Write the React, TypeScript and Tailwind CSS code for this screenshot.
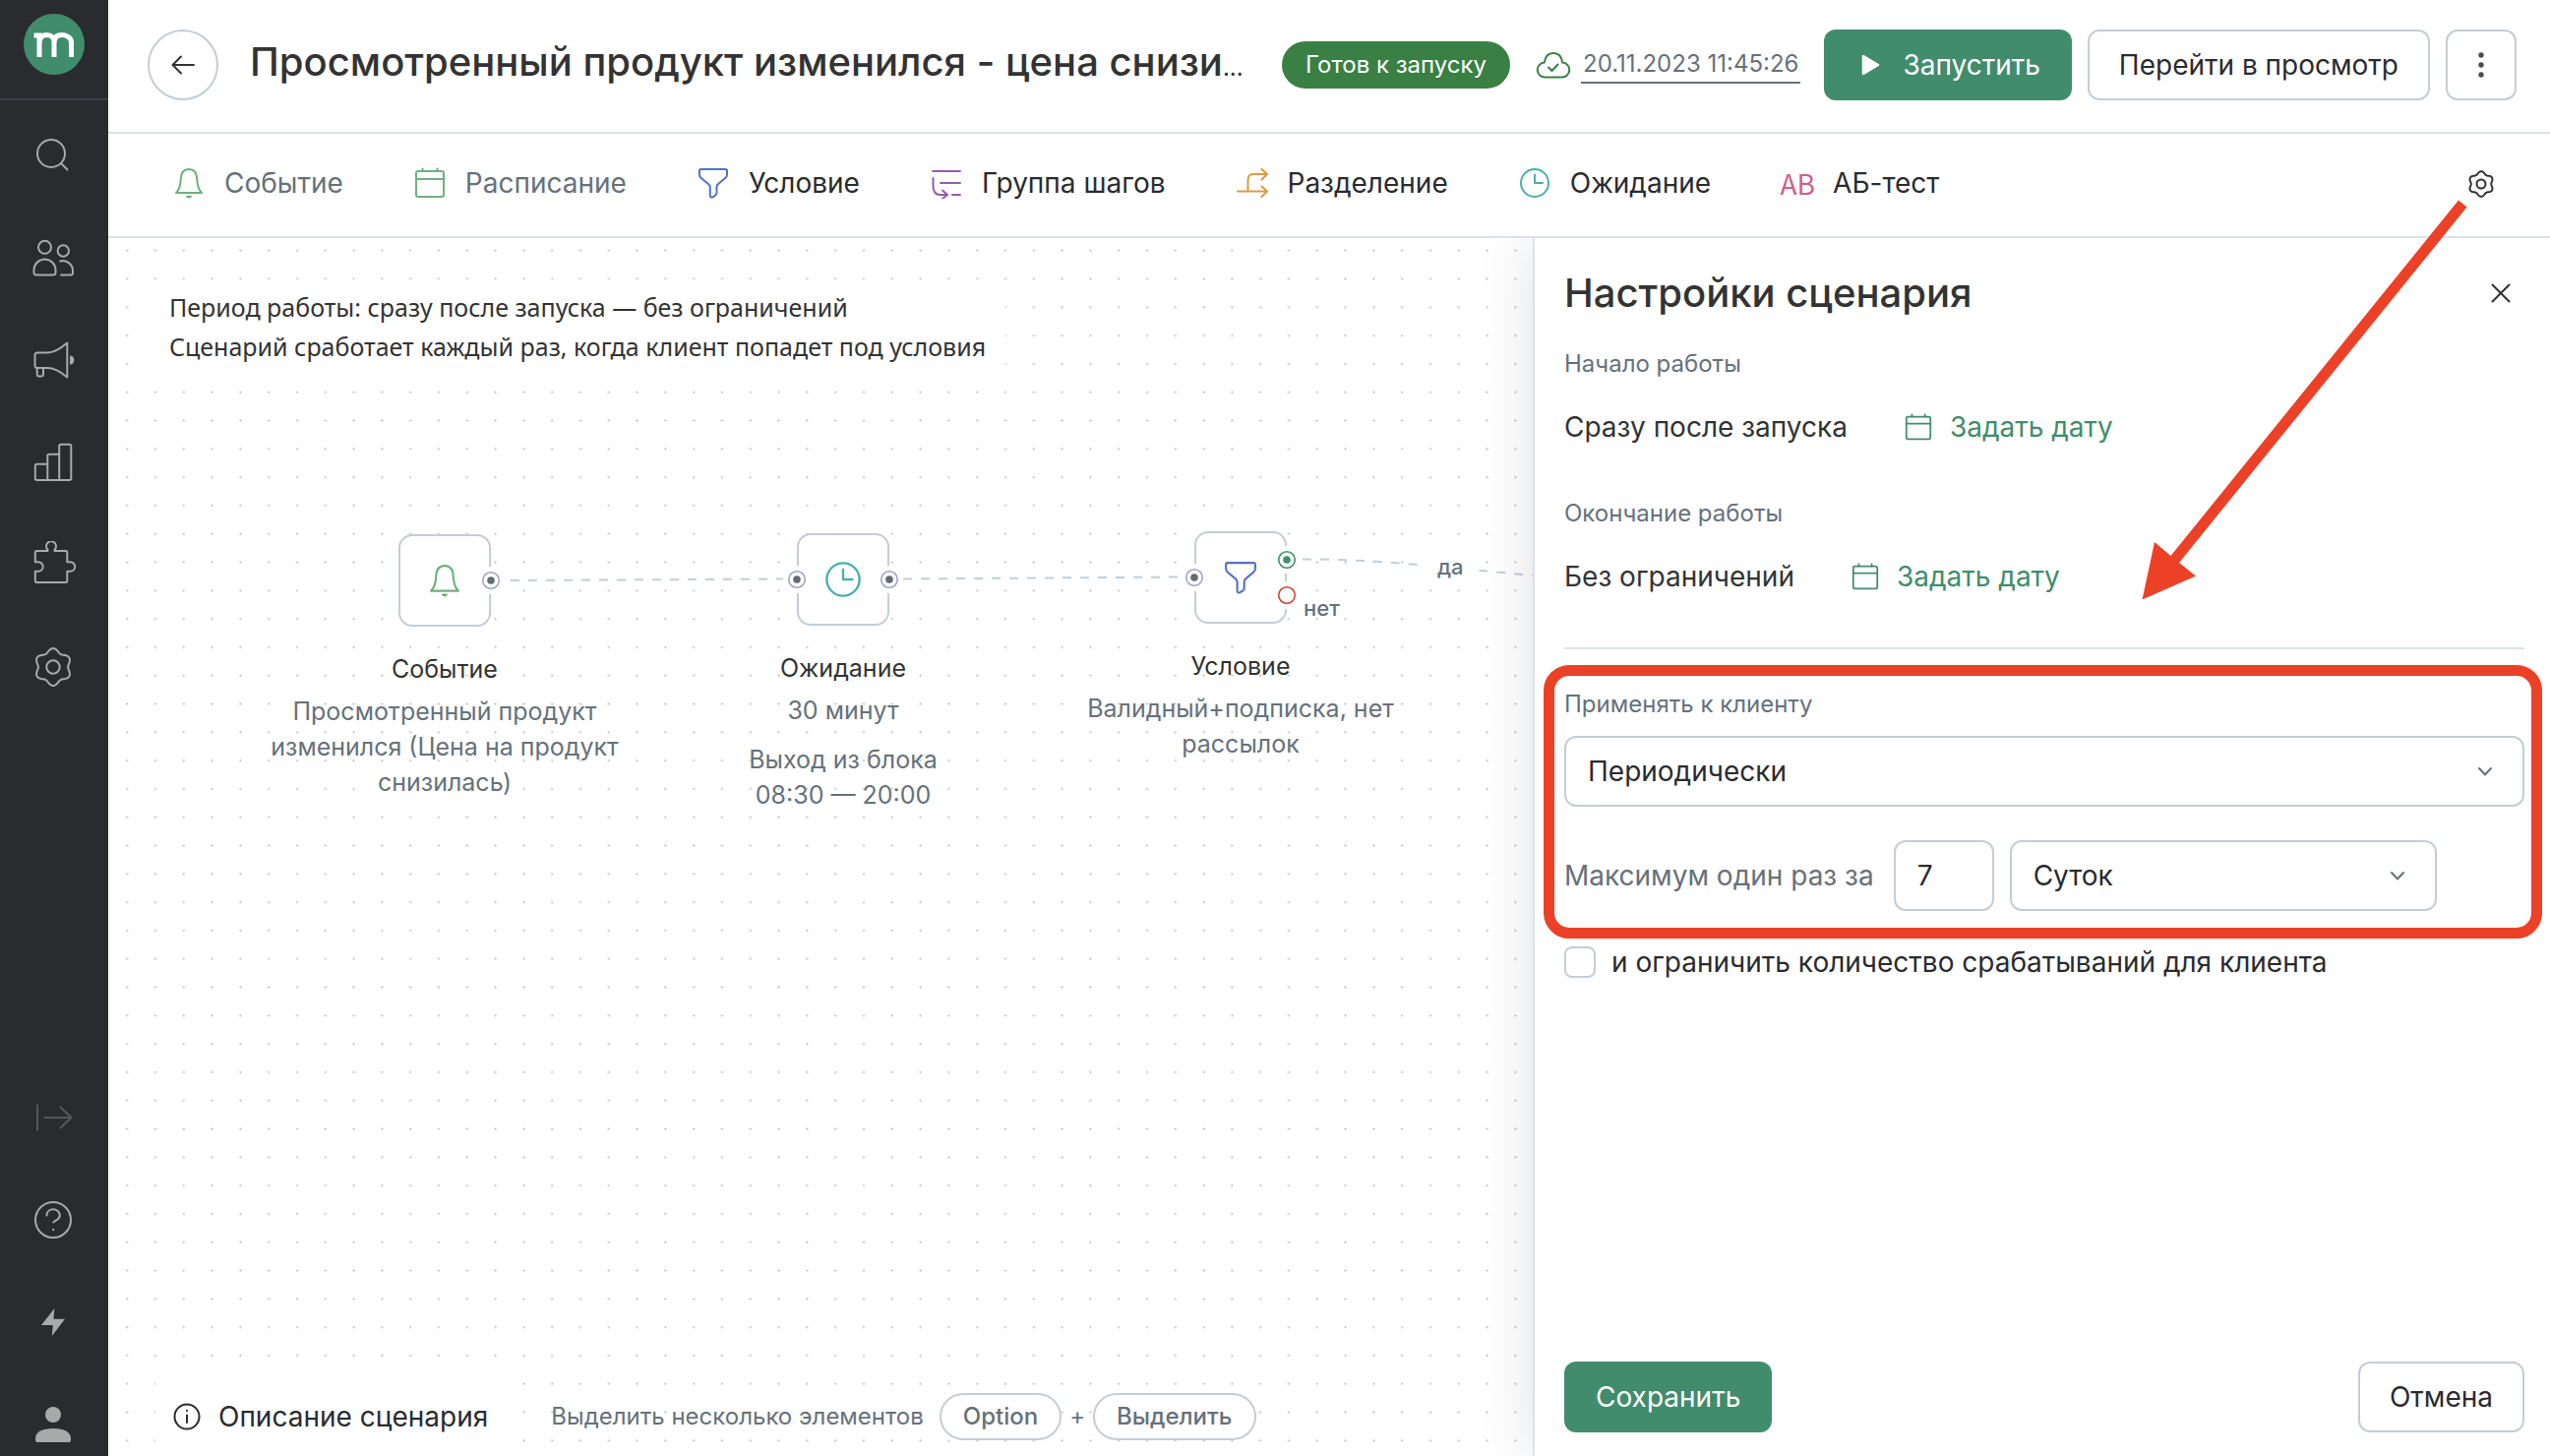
import type { ReactNode } from "react";

type IconProps = { children: ReactNode; className?: string; box?: number };

function Icon({ children, className = "size-8", box = 32 }: IconProps) {
  return (
    <svg
      viewBox={`0 0 ${box} ${box}`}
      className={`${className} shrink-0`}
      fill="none"
      stroke="currentColor"
      strokeWidth={2}
      strokeLinecap="round"
      strokeLinejoin="round"
      aria-hidden="true"
    >
      {children}
    </svg>
  );
}

function gearPath(cx: number, cy: number, mid: number, swing: number) {
  const points: string[] = [];
  for (let i = 0; i < 120; i++) {
    const a = (i / 120) * Math.PI * 2;
    const r = mid + swing * Math.cos(6 * a);
    points.push(`${(cx + r * Math.sin(a)).toFixed(2)} ${(cy - r * Math.cos(a)).toFixed(2)}`);
  }
  return `M${points.join("L")}Z`;
}

/* Step icons */

const BellIcon = ({ className }: { className?: string }) => (
  <Icon className={className}>
    <path d="M3 26C6.500 22.500 7.500 18 7.800 12C8 5.500 11 2 16 2S24 5.500 24.200 12C24.500 18 25.500 22.500 29 26Z" />
    <path d="M13.500 29.500h5a2.500 2 0 0 1-5 0Z" fill="currentColor" stroke="none" />
    <path d="M14.200 29.700h3.600" />
  </Icon>
);

const CalendarIcon = ({ className }: { className?: string }) => (
  <Icon className={className}>
    <rect x="2" y="4" width="28" height="26" rx="2" />
    <path d="M2 12H30M8.500 1.500V4M23.500 1.500V4" />
  </Icon>
);

const FunnelIcon = ({ className }: { className?: string }) => (
  <Icon className={className}>
    <path d="M2 3.500Q2 2 3.500 2H28.500Q30 2 30 3.500V7.500Q30 9.500 28.500 10.800L20.500 17.500Q19.500 18.500 19.500 20.500V26Q19.500 27.500 18.200 28.500L15.500 30.300Q12.800 31.200 12.800 28.500V20.500Q12.800 18.500 11.500 17.500L3.500 10.800Q2 9.500 2 7.500Z" />
  </Icon>
);

const GroupIcon = () => (
  <Icon>
    <path d="M2 4H30M10 16H30M22 28H30M2.500 11V19Q2.500 28 10 28H17M12 23.500L17 28L12 32" />
  </Icon>
);

const SplitIcon = () => (
  <Icon>
    <path d="M1 24.500H31M25.500 19.500L31 24.500L25.500 30M11.500 24V13Q11.500 7 16.500 7H31M25.500 2L31 7L25.500 12.500" />
  </Icon>
);

const ClockIcon = ({ className }: { className?: string }) => (
  <Icon className={className}>
    <circle cx="16" cy="16" r="14" />
    <path d="M16 7.500V16H24" />
  </Icon>
);

const AbIcon = () => (
  <span
    aria-hidden="true"
    className="flex h-8 w-8 shrink-0 items-center justify-center text-[28px] leading-8 [font-family:'Noto_Sans_CJK_SC',sans-serif]"
  >
    AB
  </span>
);

/* Sidebar */

const topNav: { label: string; icon: ReactNode }[] = [
  {
    label: "Поиск",
    icon: (
      <>
        <circle cx="21" cy="22" r="14" />
        <path d="M31 32L37.500 38.500" />
      </>
    ),
  },
  {
    label: "Клиенты",
    icon: (
      <>
        <circle cx="14.500" cy="13.300" r="6.500" />
        <circle cx="33.300" cy="17" r="5.700" />
        <path d="M3.500 39V36.500A11 11 0 0 1 25.500 36.500V39Q25.500 41.500 23 41.500H6Q3.500 41.500 3.500 39Z" />
        <path d="M30 27.500Q32 27 33 27C39 27.500 43 32 43 37V39.500Q43 41.500 41 41.500H31" />
      </>
    ),
  },
  {
    label: "Кампании",
    icon: (
      <>
        <path d="M17 16.500H7Q4.500 16.500 4.500 19V29.500Q4.500 32 7 32H17C25 32 31 36 37.300 41.500V6.500C31 12 25 16.500 17 16.500Z" />
        <path d="M6.700 32V38Q6.700 40.500 8.700 40.500H11Q13 40.500 13 38V32" />
        <path d="M41 20.500A3.800 3.800 0 0 1 41 27.500Z" fill="currentColor" />
      </>
    ),
  },
  {
    label: "Отчёты",
    icon: (
      <path d="M17.300 42V17.500Q17.300 15.800 19 15.800H29M29.200 42V7.500Q29.200 5.800 31 5.800H39.500Q41.300 5.800 41.300 7.500V40.300Q41.300 42 39.500 42H6.500Q4.800 42 4.800 40.300V27.500Q4.800 25.800 6.500 25.800H17" />
    ),
  },
  {
    label: "Интеграции",
    icon: (
      <path d="M6.500 10H17.500V8.800A5 5 0 1 1 24.500 8.800V10H35.500Q37.300 10 37.300 11.800V21.300H40.500A4.700 4.700 0 0 1 40.500 30.700H37.300V40.200Q37.300 42 35.500 42H6.500Q4.800 42 4.800 40.200V30.700H8A4.700 4.700 0 0 0 8 21.300H4.800V11.800Q4.800 10 6.500 10Z" />
    ),
  },
  {
    label: "Настройки",
    icon: (
      <>
        <path d={gearPath(23, 24, 17, 1.9)} />
        <circle cx="23" cy="24" r="6.700" />
      </>
    ),
  },
];

const bottomNav: { label: string; muted?: boolean; icon: ReactNode }[] = [
  {
    label: "Развернуть меню",
    muted: true,
    icon: <path d="M7 11.500V36.500M14.500 24H41.500M30.500 13.500L41.500 24L30.500 34.500" />,
  },
  {
    label: "Помощь",
    icon: (
      <>
        <circle cx="23" cy="24" r="18" />
        <path d="M16.500 19.500C16.500 15.500 19.500 13.300 23 13.300S29.800 15.700 29.800 19.500C29.800 24 25 24 23.300 26.500" />
        <path d="M23.200 33.800V34.300" />
      </>
    ),
  },
  {
    label: "Обновления",
    icon: (
      <path
        d="M24.400 10L23.400 20.800H35L21.800 38L22.800 27H11Z"
        fill="currentColor"
        stroke="none"
      />
    ),
  },
  {
    label: "Профиль",
    icon: (
      <g fill="currentColor" stroke="none">
        <circle cx="23" cy="14" r="8" />
        <path d="M5 40V38C5 31.500 12 28 23 28S41 31.500 41 38V40Q41 42 39 42H7Q5 42 5 40Z" />
      </g>
    ),
  },
];

function Sidebar() {
  return (
    <nav className="flex w-[110px] shrink-0 flex-col items-center bg-[#2a2b2f] pb-2 text-[#a8a9ab]">
      <div className="flex h-[102px] w-full justify-center border-b-2 border-[#3e3f44] pt-3.5">
        <a href="#home" aria-label="Главная" className="size-[62px]">
          <svg viewBox="0 0 62 62" className="size-full" aria-hidden="true">
            <circle cx="31" cy="31" r="31" fill="#418c6c" />
            <path
              d="M10.500 22H16V44M16 30C16 24 19 21.500 23.500 21.500S31 24 31 29V44M31 30C31 24 34 21.500 38.500 21.500S48.500 24 48.500 29V44"
              fill="none"
              stroke="#fff"
              strokeWidth="5"
            />
          </svg>
        </a>
      </div>
      <div className="mt-8 flex flex-col gap-14">
        {topNav.map((item) => (
          <button key={item.label} aria-label={item.label} className="size-12">
            <Icon box={48} className="size-12">
              {item.icon}
            </Icon>
          </button>
        ))}
      </div>
      <div className="mt-auto flex flex-col gap-14">
        {bottomNav.map((item) => (
          <button
            key={item.label}
            aria-label={item.label}
            className={item.muted ? "size-12 text-[#56575b]" : "size-12"}
          >
            <Icon box={48} className="size-12">
              {item.icon}
            </Icon>
          </button>
        ))}
      </div>
    </nav>
  );
}

/* Header */

function Header() {
  return (
    <header className="flex h-[136px] shrink-0 items-center border-b-2 border-[#dce2e7] pr-[34px] pb-0.5 pl-10">
      <button
        aria-label="Назад"
        className="flex size-[72px] shrink-0 items-center justify-center rounded-full border-2 border-[#c3ced6] text-[#333]"
      >
        <Icon className="size-8">
          <path d="M27 16H5.500M14 7.500L5.500 16L14 24.500" />
        </Icon>
      </button>
      <h1 className="ml-8 min-w-0 text-[40px] leading-12 font-medium whitespace-nowrap text-[#333]">
        Просмотренный продукт изменился - цена снизи
        <span className="text-[24px] font-normal">...</span>
      </h1>
      <div className="ml-auto flex shrink-0 items-center">
        <span className="flex h-12 items-center rounded-full bg-[#3a7f44] px-6 text-[24px] text-white">
          Готов к запуску
        </span>
        <Icon className="ml-6.5 size-9 text-[#3a7f44]" box={36}>
          <path d="M9.500 30.500A7.500 7.500 0 0 1 9 15.500Q10 6 18 6T27 15.500A7.500 7.500 0 0 1 26.500 30.500ZM13 20.500L16.500 24L22.500 17.500" />
        </Icon>
        <a
          href="#history"
          className="ml-2.5 border-b-2 border-[#66717a] px-0.5 text-[24px] leading-9 whitespace-nowrap text-[#66717a]"
        >
          20.11.2023 11:45:26
        </a>
        <button className="ml-6 flex h-[72px] items-center gap-4 rounded-xl bg-[#418c6c] px-8 text-[28px] text-white">
          <svg viewBox="0 0 32 32" className="size-8" aria-hidden="true">
            <path
              d="M8 7V25L23 16Z"
              fill="#fff"
              stroke="#fff"
              strokeWidth="2.500"
              strokeLinejoin="round"
            />
          </svg>
          Запустить
        </button>
        <button className="ml-4 h-[72px] rounded-xl border-2 border-[#c3ced6] px-[30px] text-[28px] text-[#2a2b2f]">
          Перейти в просмотр
        </button>
        <button
          aria-label="Ещё"
          className="ml-4 flex size-[72px] items-center justify-center rounded-xl border-2 border-[#c3ced6] text-[#4a4c50]"
        >
          <svg viewBox="0 0 32 32" className="size-8" fill="currentColor" aria-hidden="true">
            <circle cx="16" cy="6" r="2.700" />
            <circle cx="16" cy="16" r="2.700" />
            <circle cx="16" cy="26" r="2.700" />
          </svg>
        </button>
      </div>
    </header>
  );
}

/* Step toolbar */

function Step({
  icon,
  label,
  color,
  disabled = false,
}: {
  icon: ReactNode;
  label: string;
  color: string;
  disabled?: boolean;
}) {
  return (
    <button disabled={disabled} className="flex items-center gap-5 text-[28px] leading-10">
      <span className={color}>{icon}</span>
      <span className={disabled ? "text-[#66717a]" : "text-[#2a2b2f]"}>{label}</span>
    </button>
  );
}

function Toolbar() {
  return (
    <div className="flex h-[106px] shrink-0 items-center gap-18 border-b-2 border-[#dce2e7] pr-[54px] pb-1 pl-[66px]">
      <Step icon={<BellIcon />} label="Событие" color="text-[#6fb07f]" disabled />
      <Step icon={<CalendarIcon />} label="Расписание" color="text-[#6fb07f]" disabled />
      <Step icon={<FunnelIcon />} label="Условие" color="text-[#5470c6]" />
      <Step icon={<GroupIcon />} label="Группа шагов" color="text-[#985bb0]" />
      <Step icon={<SplitIcon />} label="Разделение" color="text-[#e09a3a]" />
      <Step icon={<ClockIcon />} label="Ожидание" color="text-[#4dadb0]" />
      <Step icon={<AbIcon />} label="АБ-тест" color="text-[#d1608e]" />
      <button aria-label="Настройки сценария" className="ml-auto text-[#333]">
        <Icon>
          <path d={gearPath(16, 17, 11.5, 1.3)} />
          <circle cx="16" cy="17" r="4.500" />
        </Icon>
      </button>
    </div>
  );
}

/* Scenario canvas */

function Port({ className, tone }: { className: string; tone: "neutral" | "yes" | "no" }) {
  const ring = tone === "yes" ? "#3f8f6b" : tone === "no" ? "#d2432a" : "#a0a3c4";
  const core = tone === "yes" ? "#3f8f6b" : tone === "no" ? "#fff" : "#626a73";
  return (
    <svg viewBox="0 0 28 28" className={`absolute size-7 ${className}`} aria-hidden="true">
      <circle cx="14" cy="14" r="14" fill="#fff" />
      <circle cx="14" cy="14" r="8.300" fill="#fff" stroke={ring} strokeWidth="1.600" />
      <circle cx="14" cy="14" r="3.800" fill={core} />
    </svg>
  );
}

function Node({
  place,
  icon,
  title,
  ports,
  children,
}: {
  place: string;
  icon: ReactNode;
  title: string;
  ports: ReactNode;
  children: ReactNode;
}) {
  return (
    <div className={`absolute flex w-[380px] flex-col items-center text-center ${place}`}>
      <div className="relative flex size-[94px] items-center justify-center rounded-[14px] border-2 border-[#c3ced6] bg-white">
        {icon}
        {ports}
      </div>
      <h3 className="mt-[25px] text-[25px] leading-9 text-[#333]">{title}</h3>
      <div className="mt-[7px] text-[25px] leading-9 text-[#66717a]">{children}</div>
    </div>
  );
}

function Canvas() {
  return (
    <main className="relative min-w-0 flex-1 overflow-hidden bg-white">
      <svg className="absolute inset-0 size-full" aria-hidden="true">
        <defs>
          <pattern id="dots" x="4.800" y="-1.700" width="28.800" height="28.800" patternUnits="userSpaceOnUse">
            <circle cx="14.400" cy="14.400" r="1.100" fill="#b8b8b8" />
          </pattern>
        </defs>
        <rect width="100%" height="100%" fill="url(#dots)" />
        <g fill="none" stroke="#c3ced6" strokeWidth="2" strokeDasharray="9 9">
          <path d="M409 348L690 346.500" />
          <path d="M808 346.500L1094 344.500" />
          <path d="M1214 326.500C1290 326 1360 335 1460 344" />
        </g>
        <rect x="1332" y="316" width="60" height="36" fill="#fff" />
      </svg>

      <p className="absolute top-[42px] left-[46px] bg-white pt-2 pr-5 pb-6 pl-4 text-[25px] leading-10 text-[#333] [font-family:'Noto_Sans',sans-serif]">
        Период работы: сразу после запуска — без ограничений
        <br />
        Сценарий сработает каждый раз, когда клиент попадет под условия
      </p>

      <Node
        place="top-[301px] left-[152px]"
        icon={<BellIcon className="size-[34px] text-[#6fb07f]" />}
        title="Событие"
        ports={<Port tone="neutral" className="top-[31px] -right-4" />}
      >
        Просмотренный продукт изменился (Цена на продукт снизилась)
      </Node>
      <Node
        place="top-[300px] left-[557px]"
        icon={<ClockIcon className="size-[38px] text-[#4dadb0]" />}
        title="Ожидание"
        ports={
          <>
            <Port tone="neutral" className="top-[31px] -left-4" />
            <Port tone="neutral" className="top-[31px] -right-4" />
          </>
        }
      >
        <p>30 минут</p>
        <p className="mt-3.5">
          Выход из блока
          <br />
          08:30 — 20:00
        </p>
      </Node>
      <Node
        place="top-[298px] left-[961px]"
        icon={<FunnelIcon className="size-[34px] text-[#5470c6]" />}
        title="Условие"
        ports={
          <>
            <Port tone="neutral" className="top-[31px] -left-4" />
            <Port tone="yes" className="top-[13px] -right-4" />
            <Port tone="no" className="top-[49px] -right-4" />
          </>
        }
      >
        Валидный+подписка, нет рассылок
      </Node>
      <span className="absolute top-[318px] left-[1351px] text-[22px] leading-8 font-medium text-[#66717a]">
        да
      </span>
      <span className="absolute top-[360px] left-[1215px] text-[22px] leading-8 font-medium text-[#66717a]">
        нет
      </span>

      <div className="absolute bottom-0 left-12 flex h-20 items-center">
        <button className="flex h-20 items-center gap-4 bg-white px-4 text-[28px] text-[#2a2b2f]">
          <Icon>
            <circle cx="16" cy="16" r="12.500" />
            <path d="M16 14.500V22M16 9.700V10" />
          </Icon>
          Описание сценария
        </button>
        <p className="ml-12 flex items-center text-[24px] text-[#66717a]">
          Выделить несколько элементов
          <kbd className="ml-4 flex h-12 items-center rounded-full border-2 border-[#c3ced6] bg-white px-[22px] font-[inherit] font-medium">
            Option
          </kbd>
          <span className="mx-2">+</span>
          <kbd className="flex h-12 items-center rounded-full border-2 border-[#c3ced6] bg-white px-[22px] font-[inherit] font-medium">
            Выделить
          </kbd>
        </p>
      </div>
    </main>
  );
}

/* Scenario settings */

function DateRow({ label, value }: { label: string; value: string }) {
  return (
    <section>
      <h3 className="text-[24px] leading-8 text-[#66717a]">{label}</h3>
      <div className="mt-7 flex h-10 items-center text-[28px] text-[#333]">
        {value}
        <button className="ml-[58px] flex items-center gap-[18px] text-[#418c6c]">
          <CalendarIcon className="size-7" />
          Задать дату
        </button>
      </div>
    </section>
  );
}

function Select({ id, label, value, className }: { id: string; label?: string; value: string; className: string }) {
  return (
    <div className={`relative ${className}`}>
      <select
        id={id}
        aria-label={label}
        className="h-[72px] w-full appearance-none rounded-xl border-2 border-[#c3ced6] bg-white px-[22px] text-[28px] text-[#2a2b2f]"
      >
        <option>{value}</option>
      </select>
      <svg
        viewBox="0 0 16 16"
        className="pointer-events-none absolute top-7 right-8 size-4"
        fill="none"
        stroke="#66717a"
        strokeWidth="2"
        strokeLinecap="round"
        strokeLinejoin="round"
        aria-hidden="true"
      >
        <path d="M2 5L8 11.500L14 5" />
      </svg>
    </div>
  );
}

function SettingsPanel() {
  return (
    <aside className="relative flex w-[1034px] shrink-0 flex-col border-l-2 border-[#dce2e7] bg-white pt-8 pr-[26px] pb-6 pl-[30px] shadow-[0_0_56px_rgba(0,0,0,0.12)]">
      <div className="flex items-center justify-between">
        <h2 className="text-[40px] leading-12 font-medium text-[#333]">Настройки сценария</h2>
        <button aria-label="Закрыть" className="mr-2 text-[#333]">
          <Icon>
            <path d="M7.500 7.500L24.500 24.500M24.500 7.500L7.500 24.500" />
          </Icon>
        </button>
      </div>
      <div className="mt-8 flex flex-col gap-[52px]">
        <DateRow label="Начало работы" value="Сразу после запуска" />
        <DateRow label="Окончание работы" value="Без ограничений" />
      </div>
      <hr className="mt-[52px] border-t-2 border-[#dce2e7]" />

      <section className="relative mt-10">
        <label htmlFor="apply" className="block text-[24px] leading-8 text-[#66717a]">
          Применять к клиенту
        </label>
        <Select id="apply" value="Периодически" className="mt-4" />
        <div className="mt-[34px] flex items-center text-[28px]">
          <label htmlFor="count" className="text-[#66717a]">
            Максимум один раз за
          </label>
          <input
            id="count"
            type="text"
            defaultValue="7"
            className="ml-5 h-[72px] w-[102px] rounded-xl border-2 border-[#c3ced6] px-[22px] text-[#2a2b2f]"
          />
          <Select id="unit" label="Единица времени" value="Суток" className="ml-4 w-[434px]" />
        </div>
        <div className="pointer-events-none absolute -top-6 -right-[18px] -bottom-7 -left-[21px] rounded-[26px] border-[11px] border-[#ec4127]" />
      </section>

      <label className="mt-9 flex items-center gap-4 text-[28px] leading-8 text-[#2a2b2f]">
        <input
          type="checkbox"
          className="size-8 appearance-none rounded-lg border-2 border-[#c3ced6] bg-white"
        />
        и ограничить количество срабатываний для клиента
      </label>

      <div className="mt-auto flex justify-between text-[28px]">
        <button className="h-[72px] rounded-xl bg-[#418c6c] px-8 text-white">Сохранить</button>
        <button className="h-[72px] rounded-xl border-2 border-[#c3ced6] px-[30px] text-[#2a2b2f]">
          Отмена
        </button>
      </div>
    </aside>
  );
}

export default function App() {
  return (
    <div className="relative flex h-screen overflow-hidden bg-white [font-family:Inter,sans-serif]">
      <Sidebar />
      <div className="flex min-w-0 flex-1 flex-col">
        <Header />
        <Toolbar />
        <div className="flex min-h-0 flex-1 overflow-hidden">
          <Canvas />
          <SettingsPanel />
        </div>
      </div>
      <svg
        viewBox="0 0 500 640"
        className="pointer-events-none absolute top-0 right-0 h-[640px] w-[500px]"
        fill="#ec4127"
        aria-hidden="true"
      >
        <path d="M407 203.500L415.500 210.500L123 572L140 585.500L85.500 609.500L98 551L114.500 565Z" />
      </svg>
    </div>
  );
}
